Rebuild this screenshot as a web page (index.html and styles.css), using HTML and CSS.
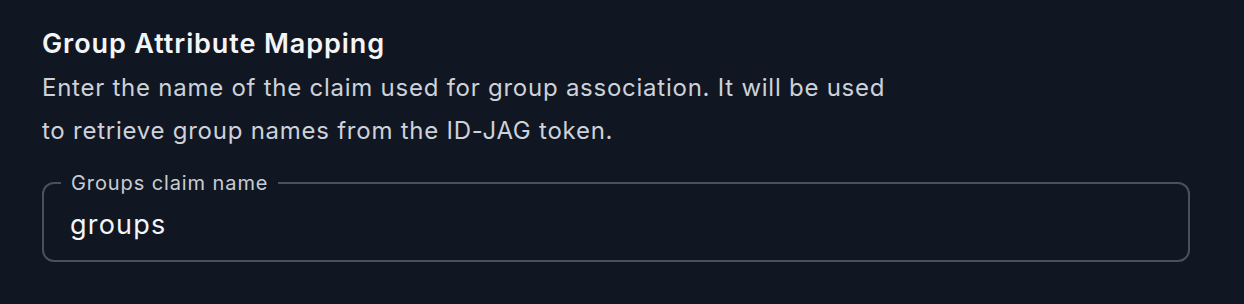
FILE: index.html
```html
<!DOCTYPE html>
<html lang="en">
<head>
    <meta charset="UTF-8">
    <title>Group Attribute Mapping</title>
    <link rel="stylesheet" href="styles.css">
</head>
<body>
    <div class="section">
        <h2 class="section-title">Group Attribute Mapping</h2>
        <p class="section-desc">Enter the name of the claim used for group association. It will be used<br>to retrieve group names from the ID-JAG token.</p>

        <fieldset class="field">
            <legend class="field-label">Groups claim name</legend>
            <input class="field-input" type="text" value="groups">
        </fieldset>
    </div>
</body>
</html>
```

FILE: styles.css
```css
/* group mapping settings */
body {
    margin: 0;
    padding: 0;
    background: #111722;
    font-family: 'Inter', 'Roboto', sans-serif;
    color: #f4f5f7;
}

.section {
    padding: 28px 54px 0 42px;
}

.section-title {
    margin: 0;
    font-size: 27px;
    font-weight: 600;
    line-height: 32px;
    letter-spacing: 0.9px;
    color: #f4f5f7;
}

.section-desc {
    margin: 6px 0 0;
    font-size: 24px;
    line-height: 43px;
    letter-spacing: 0.75px;
    color: #cdd2da;
}

.field {
    margin: 19px 0 0;
    padding: 14px 17px 19px;
    border: 2px solid #4b515c;
    border-radius: 12px;
}

.field-label {
    padding: 0 10px;
    font-size: 20px;
    line-height: 24px;
    letter-spacing: 0.9px;
    color: #c8cdd5;
}

.field-input {
    display: block;
    width: 100%;
    box-sizing: border-box;
    margin: 0;
    padding: 0 0 0 9px;
    height: 32px;
    border: none;
    outline: none;
    background: transparent;
    font-family: inherit;
    font-size: 27px;
    line-height: 32px;
    letter-spacing: 1.2px;
    color: #f4f5f7;
}
```
